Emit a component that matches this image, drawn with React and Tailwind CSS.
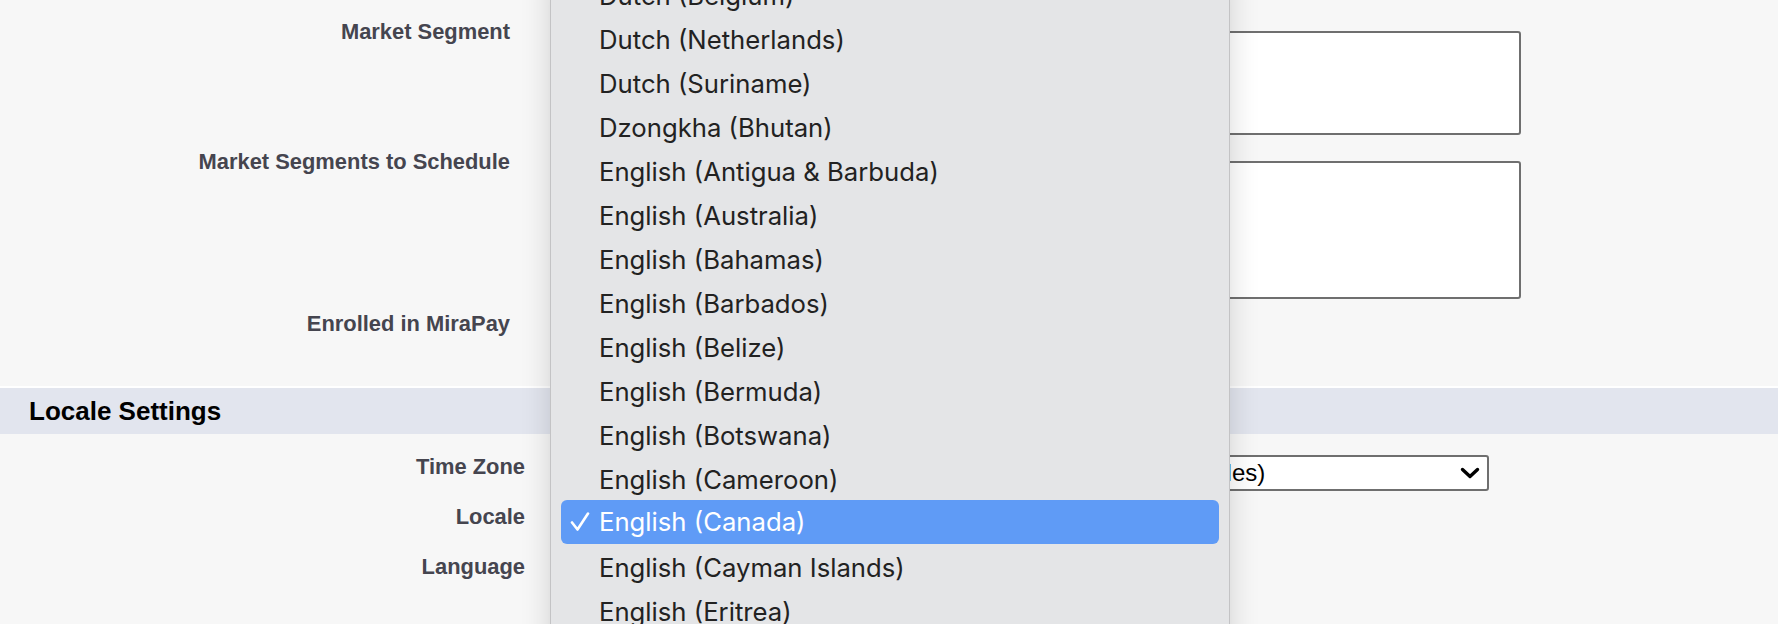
import React from "react";

const OPTIONS = [
  "Dutch (Belgium)",
  "Dutch (Netherlands)",
  "Dutch (Suriname)",
  "Dzongkha (Bhutan)",
  "English (Antigua & Barbuda)",
  "English (Australia)",
  "English (Bahamas)",
  "English (Barbados)",
  "English (Belize)",
  "English (Bermuda)",
  "English (Botswana)",
  "English (Cameroon)",
  "English (Canada)",
  "English (Cayman Islands)",
  "English (Eritrea)",
];
const SELECTED = "English (Canada)";

function Label({ children, width }) {
  return (
    <div className={`${width} shrink-0 text-right text-[21.9px] font-bold leading-6 text-[#45454f]`}>{children}</div>
  );
}

function Check() {
  return (
    <svg width="20" height="20" viewBox="0 0 20 20" fill="none">
      <path d="M2 10.5 L7.5 17.5 L18 1.5" stroke="white" strokeWidth="2.6" strokeLinecap="round" strokeLinejoin="round" />
    </svg>
  );
}

function Chevron() {
  return (
    <svg width="20" height="12" viewBox="0 0 20 12" fill="none">
      <path d="M2.5 2.5 L10 9.5 L17.5 2.5" stroke="black" strokeWidth="3.4" strokeLinecap="round" strokeLinejoin="round" />
    </svg>
  );
}

export default function App() {
  return (
    <div className="relative h-[624px] w-full overflow-hidden bg-[#f7f7f7] font-['Liberation_Sans',Arial,sans-serif]">
      {/* marketing fields */}
      <div className="pt-5">
        <div className="flex h-[130px]">
          <Label width="w-[510px]">Market Segment</Label>
          <div className="ml-[50px] mt-[11px] h-[104px] w-[961px] rounded-[3px] border-2 border-[#6f6f6f] bg-white" />
        </div>
        <div className="flex h-[162px]">
          <Label width="w-[510px]">Market Segments to Schedule</Label>
          <div className="ml-[50px] mt-[11px] h-[138px] w-[961px] rounded-[3px] border-2 border-[#6f6f6f] bg-white" />
        </div>
        <div className="flex h-6">
          <Label width="w-[510px]">Enrolled in MiraPay</Label>
        </div>
      </div>

      <div className="mt-[50px] h-[48px] border-t-2 border-white bg-[#e2e5ee] pl-[29px] text-[26px] font-bold leading-[46px] text-black">
        Locale Settings
      </div>

      <div className="mt-[21px]">
        <div className="flex h-[50px]">
          <Label width="w-[525px]">Time Zone</Label>
          <div className="ml-[35px] flex h-9 w-[929px] items-center justify-between rounded-[3px] border-2 border-[#6f6f6f] bg-white pl-[71px] pr-[7px]">
            <span className="whitespace-nowrap text-[24px] leading-none text-black">(GMT-08:00) Pacific Standard Time (America/Los_Angeles)</span>
            <Chevron />
          </div>
        </div>
        <div className="flex h-[50px]">
          <Label width="w-[525px]">Locale</Label>
        </div>
        <div className="flex h-[50px]">
          <Label width="w-[525px]">Language</Label>
        </div>
      </div>

      {/* open locale menu */}
      <div className="absolute top-[-27px] bottom-[-40px] left-[550px] w-[680px] border border-[#c3c3c5] bg-[#e4e5e7] px-[10px] font-['Inter',sans-serif] shadow-[0_0_28px_rgba(0,0,0,0.16)]">
        {OPTIONS.map((o) => {
          const sel = o === SELECTED;
          return (
            <div
              key={o}
              className={`flex h-[44px] items-center rounded-[6px] pl-[9px] text-[25.7px] ${sel ? "-mt-[2px] mb-[2px] bg-[#5f9bf6] text-white" : "text-[#222]"}`}
            >
              <div className="w-[29px]">{sel && <Check />}</div>
              <span>{o}</span>
            </div>
          );
        })}
      </div>
    </div>
  );
}
